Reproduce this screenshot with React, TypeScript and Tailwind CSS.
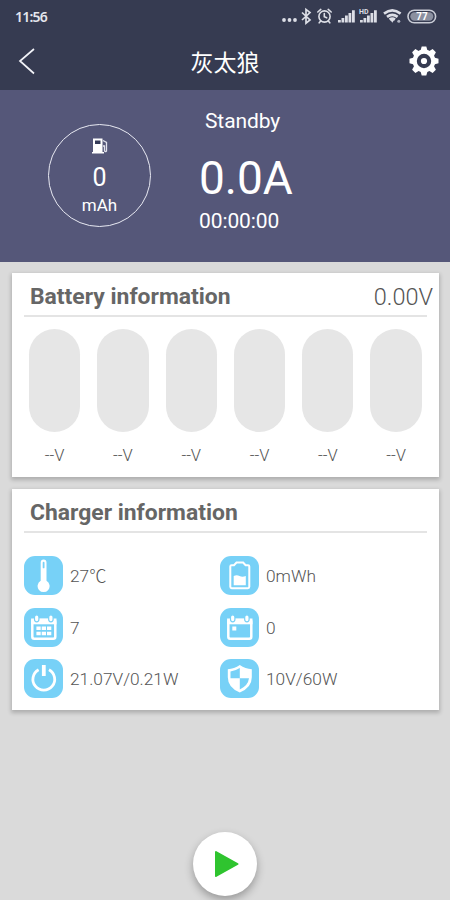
import type { ReactNode } from 'react';

const cells = ['--V', '--V', '--V', '--V', '--V', '--V'];

function StatusIcons() {
  return (
    <svg className="absolute left-[280px] top-0 h-[34px] w-[160px]" viewBox="280 0 160 34" fill="none">
      <g fill="#dcdee6">
        <circle cx="284" cy="20" r="1.9" />
        <circle cx="289.5" cy="20" r="1.9" />
        <circle cx="295" cy="20" r="1.9" />
      </g>
      {/* bluetooth */}
      <path d="M302 12.5l8 7.5-4 3.2V9.4l4 3.1-8 7.5" stroke="#dcdee6" strokeWidth="1.7" />
      {/* alarm */}
      <g stroke="#dcdee6" strokeWidth="1.6" strokeLinecap="round">
        <circle cx="324.5" cy="16.5" r="5.6" />
        <path d="M324.3 13.5v3.3l2.4 1M317.8 12l3-2.6M331.2 12l-3-2.6M320.7 21l-1.5 1.8M328.3 21l1.5 1.8" />
      </g>
      {/* signal bars */}
      <g fill="#dcdee6">
        <path d="M338 20h2.8v2.5H338zM341.5 18h2.8v4.5h-2.8zM345 15.5h2.8v7H345zM348.5 13h2.8v9.5h-2.8zM352 10.2h2.8v12.3H352z" />
        <path d="M360 20h2.8v2.5H360zM363.5 18h2.8v4.5h-2.8zM367 15.500h2.8v7H367zM370.5 13h2.8v9.500h-2.8zM374 10.200h2.8v12.300H374z" />
      </g>
      {/* wifi */}
      <g stroke="#dcdee6" strokeWidth="2.6">
        <path d="M384 13.600q8.300-6.400 16.600 0M387 16.900q5.300-4 10.600 0M389.600 19.600q2.700-2 5.400 0" />
      </g>
      <path d="M390.500 20h3.600l-1.800 2.800z" fill="#dcdee6" />
      <circle cx="398.800" cy="21.300" r="1.500" fill="#aeb2c0" />
      {/* battery */}
      <rect x="408" y="10.200" width="27.600" height="12.600" rx="6.300" stroke="#c9ccd6" strokeWidth="1.600" />
      <rect x="410.300" y="12.300" width="23" height="8.400" rx="4.200" fill="#8b90a0" />
    </svg>
  );
}

function Tile({ children }: { children: ReactNode }) {
  return (
    <div className="h-[39px] w-[39px] shrink-0 rounded-[11px] bg-[#77d1f7]">
      <svg className="h-[39px] w-[39px]" viewBox="0 0 39 39" fill="none">
        {children}
      </svg>
    </div>
  );
}

function Info({ icon, text }: { icon: ReactNode; text: string }) {
  return (
    <div className="flex h-[39px] items-center gap-[7px]">
      <Tile>{icon}</Tile>
      <span className="mt-[1px] whitespace-nowrap text-[17.300px] font-light leading-5 text-[#555]">{text}</span>
    </div>
  );
}

const thermometer = (
  <>
    <path d="M16.700 6.400a2.900 2.900 0 0 1 5.800 0v18.400a6 6 0 1 1-5.800 0z" fill="#fff" />
    <rect x="18.700" y="5.800" width="1.800" height="6.500" rx=".9" fill="#77d1f7" />
  </>
);

const battery = (
  <>
    <path
      d="M11.500 9.200h2.500l2.500-2.700h6.600l2.500 2.700h2.500q1.200 0 1.200 1.300v20.300q0 1.400-1.400 1.400H11.700q-1.400 0-1.400-1.400V10.500q0-1.300 1.200-1.300z"
      stroke="#fff"
      strokeWidth="2"
    />
    <path d="M13.700 20q3-1.500 5.800 0t6.300 0v9.300H13.700z" fill="#fff" />
  </>
);

const calendarFrame = (
  <>
    <rect x="8.300" y="12" width="23" height="18.800" rx="2" stroke="#fff" strokeWidth="2.500" />
    <path d="M7.100 10.500h25.400v5.800H7.100z" fill="#fff" />
    <rect x="10.500" y="6.800" width="4.400" height="7" rx="2.200" fill="#fff" stroke="#77d1f7" strokeWidth="1.200" />
    <rect x="24.700" y="6.800" width="4.400" height="7" rx="2.200" fill="#fff" stroke="#77d1f7" strokeWidth="1.200" />
  </>
);

const calendarGrid = (
  <>
    {calendarFrame}
    <path
      d="M12.400 18.500h4.300v3.600h-4.300zM17.700 18.500h4.300v3.600h-4.300zM23 18.500h4.300v3.600H23zM12.400 23.700h4.300v3.600h-4.300zM17.700 23.700h4.300v3.600h-4.300zM23 23.700h4.300v3.600H23z"
      fill="#fff"
    />
  </>
);

const calendarDay = (
  <>
    {calendarFrame}
    <rect x="12.300" y="18.500" width="4" height="4" fill="#fff" />
  </>
);

const power = (
  <g stroke="#fff">
    <path d="M14.600 10.700a10.900 10.900 0 1 0 10.400 0" strokeWidth="2.800" />
    <path d="M19.800 6v11" strokeWidth="3.800" />
  </g>
);

const shield = (
  <>
    <path d="M19.800 6q5.600 3.800 12 4.200v8q0 10.400-12 15.200-12-4.800-12-15.200v-8q6.400-.4 12-4.200z" fill="#fff" />
    <path d="M19.800 9v10.300h-9.300v-6.800q5.200-.8 9.300-3.500zM19.800 19.300h9.200q-.8 7.200-9.200 11.200z" fill="#77d1f7" />
  </>
);

const gearTeeth = [0, 45, 90, 135, 180, 225, 270, 315];

function Gear() {
  return (
    <svg className="h-[30px] w-[30px]" viewBox="-15 -15 30 30">
      <circle r="9.300" fill="none" stroke="#fff" strokeWidth="4.200" />
      {gearTeeth.map((a) => (
        <path key={a} d="M-3.600-10L-2.300-14.500H2.300L3.600-10z" fill="#fff" transform={`rotate(${a})`} />
      ))}
      <circle r="3.100" fill="#fff" />
    </svg>
  );
}

export default function App() {
  return (
    <div className="flex h-[900px] w-[450px] flex-col overflow-hidden bg-[#dadada] font-['Roboto','Noto_Sans_CJK_SC',sans-serif]">
      <header className="h-[90px] shrink-0 bg-[#363b51]">
        <div className="relative h-[34px] pl-[15px] pt-[7px]">
          <span className="block font-['Noto_Sans',sans-serif] text-[14px] font-semibold leading-5 tracking-[-0.800px] text-[#e4e6ee]">
            11:56
          </span>
          <StatusIcons />
          <span className="absolute left-[407px] top-[10px] w-[30px] text-center text-[10px] font-bold leading-[13px] text-white">
            77
          </span>
          <span className="absolute left-[359px] top-[9px] text-[7px] font-bold leading-[7px] text-[#dcdee6]">HD</span>
        </div>
        <div className="grid h-[54px] grid-cols-[60px_1fr_60px] items-center">
          <svg className="ml-[18px] h-7 w-[18px]" viewBox="0 0 18 28" fill="none">
            <path d="M16 2L2 14l14 12.500" stroke="#f2f3f8" strokeWidth="1.700" />
          </svg>
          <h1 className="mt-[5px] text-center text-[23px] leading-7 text-white">灰太狼</h1>
          <div className="ml-[19px]">
            <Gear />
          </div>
        </div>
      </header>

      <section className="flex h-[172px] shrink-0 bg-[#555779] text-white">
        <div className="ml-12 mt-[34px] flex h-[103px] w-[103px] shrink-0 flex-col items-center rounded-full border-[1.500px] border-[#e8e9f2] pt-[12px]">
          <svg className="h-[18px] w-[18px]" viewBox="0 0 18 18" fill="none">
            <path d="M2 1.500h9.500V15H13v1.500H1V15h1z" fill="#fff" />
            <path d="M4 3.500h5.500V7H4z" fill="#343a58" />
            <path d="M12 3.500l3.500 2v8.500q-1.500 1.500-2-.5V9H12" stroke="#e2e3ed" strokeWidth="1.300" />
          </svg>
          <span className="mt-[9px] text-[25px] leading-7">0</span>
          <span className="mt-[2px] text-[17px] leading-[22px]">mAh</span>
        </div>
        <div className="ml-12 flex flex-col pt-[19px]">
          <span className="ml-[6px] text-[21px] leading-6 tracking-[-0.100px]">Standby</span>
          <span className="mt-[18px] text-[46px] leading-[54px]">0.0A</span>
          <span className="mt-[4px] text-[21px] leading-6 tracking-[-0.100px]">00:00:00</span>
        </div>
      </section>

      <section className="ml-3 mt-[11px] h-[204px] w-[427px] shrink-0 bg-white shadow-[0_2px_4px_1px_rgba(0,0,0,0.2)]">
        <div className="mx-3 flex h-[44px] items-center justify-between border-b-2 border-[#e4e4e4] pl-[6px] pt-[5px]">
          <h2 className="text-[22.900px] font-bold leading-7 text-[#666]">Battery information</h2>
          <span className="mr-[-6px] text-[23.500px] font-light leading-7 text-[#555]">0.00V</span>
        </div>
        <div className="ml-[17px] mt-3 flex gap-[17px]">
          {cells.map((v, i) => (
            <div key={i} className="flex w-[51.300px] flex-col items-center">
              <div className="h-[103px] w-full rounded-full bg-[#e6e6e6]" />
              <span className="mt-[14px] text-[16.500px] font-light leading-5 text-[#555]">{v}</span>
            </div>
          ))}
        </div>
      </section>

      <section className="ml-3 mt-3 h-[221px] w-[427px] shrink-0 bg-white shadow-[0_2px_4px_1px_rgba(0,0,0,0.2)]">
        <div className="mx-3 flex h-[44px] items-center border-b-2 border-[#e4e4e4] pl-[6px] pt-[5px]">
          <h2 className="text-[22.900px] font-bold leading-7 text-[#666]">Charger information</h2>
        </div>
        <div className="ml-3 mt-[23px] grid grid-cols-[196px_1fr] gap-y-[12.500px]">
          <Info icon={thermometer} text="27℃" />
          <Info icon={battery} text="0mWh" />
          <Info icon={calendarGrid} text="7" />
          <Info icon={calendarDay} text="0" />
          <Info icon={power} text="21.07V/0.21W" />
          <Info icon={shield} text="10V/60W" />
        </div>
      </section>

      <button className="ml-[193px] mt-[122px] h-16 w-16 shrink-0 rounded-full bg-white shadow-[0_4px_8px_rgba(0,0,0,0.3)]">
        <svg className="h-16 w-16" viewBox="0 0 64 64">
          <path d="M23 20l21.500 12L23 44z" fill="#2fc42f" stroke="#2fc42f" strokeWidth="2" strokeLinejoin="round" />
        </svg>
      </button>
    </div>
  );
}
